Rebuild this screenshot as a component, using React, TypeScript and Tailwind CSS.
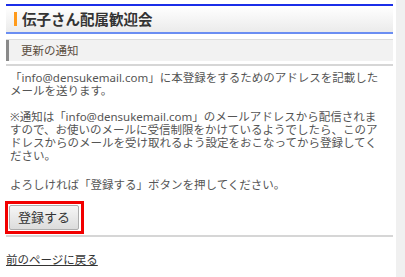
export default function App() {
  const font = { fontFamily: '"Noto Sans", "Noto Sans CJK JP", sans-serif' };

  return (
    <div className="flex min-h-[277px] w-[405px] bg-white" style={font}>
      <div className="w-[396px] pl-[6px] pr-[3px] pt-[4px]">
        {/* event title */}
        <div className="border-t-2 border-b-2 border-t-[#1a2ee8] border-b-[#6b8ef2] bg-gradient-to-b from-white to-[#ebebeb]">
          <div className="flex h-[26px] items-center gap-[5px] pl-[8px]">
            <span className="h-[14px] w-[3px] bg-[#ff9a1a]" />
            <h1 className="text-[14.5px] font-bold leading-none text-[#333]">
              伝子さん配属歓迎会
            </h1>
          </div>
        </div>

        {/* section heading */}
        <div className="mt-[5px] border-t border-[#dddddd] bg-[#f2f2f2]">
          <div className="flex h-[21px] items-center border-l-[3px] border-[#8a8a8a] pl-[12px] text-[11.5px] text-[#5a4c3e]">
            更新の通知
          </div>
        </div>
        <div className="mt-[3px] h-[2px] bg-[#d6d6d6]" />

        <div className="pl-[4px] pr-[7px] pt-[5px] text-[11.5px] leading-[13px] text-[#555]">
          <p className="mb-[13px]">
            「info@densukemail.com」に本登録をするためのアドレスを記載したメールを送ります。
          </p>
          <p className="mb-[16px]">
            ※通知は「info@densukemail.com」のメールアドレスから配信されますので、お使いのメールに受信制限をかけているようでしたら、このアドレスからのメールを受け取れるよう設定をおこなってから登録してください。
          </p>
          <p>よろしければ「登録する」ボタンを押してください。</p>
        </div>

        <div className="mt-[10px] ml-[-1px] inline-block border-[3px] border-[#f20000] p-px pr-[2px]">
          <button
            type="button"
            className="block h-[25px] w-[70px] rounded-[2px] border border-[#adadad] bg-gradient-to-b from-[#f6f6f6] to-[#dcdcdc] text-[13px] leading-none text-[#333]"
          >
            登録する
          </button>
        </div>

        <div className="mt-px h-[2px] bg-[#d6d6d6]" />

        <a href="#" className="mt-[16px] inline-block text-[11.5px] leading-[13px] text-[#333] underline">
          前のページに戻る
        </a>
      </div>
      <div className="flex-1 bg-[#f0f0f0]" />
    </div>
  );
}
